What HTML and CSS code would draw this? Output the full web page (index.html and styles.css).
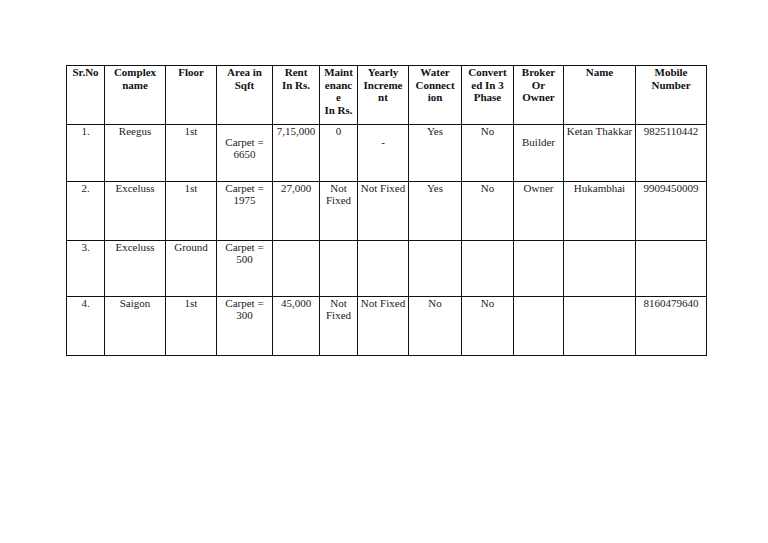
FILE: index.html
```html
<!DOCTYPE html>
<html>
<head>
<meta charset="utf-8">
<link rel="stylesheet" href="styles.css">
</head>
<body>
<div class="page">
<table class="sheet">
<colgroup>
<col class="c1"><col class="c2"><col class="c3"><col class="c4"><col class="c5"><col class="c6"><col class="c7"><col class="c8"><col class="c9"><col class="c10"><col class="c11"><col class="c12">
</colgroup>
<tr class="head">
<th>Sr.No</th>
<th>Complex<br>name</th>
<th>Floor</th>
<th>Area in<br>Sqft</th>
<th>Rent<br>In Rs.</th>
<th>Maint<br>enanc<br>e<br>In Rs.</th>
<th>Yearly<br>Increme<br>nt</th>
<th>Water<br>Connect<br>ion</th>
<th>Convert<br>ed In 3<br>Phase</th>
<th>Broker<br>Or<br>Owner</th>
<th>Name</th>
<th>Mobile<br>Number</th>
</tr>
<tr class="r1">
<td>1.</td>
<td>Reegus</td>
<td>1st</td>
<td class="low">Carpet =<br>6650</td>
<td>7,15,000</td>
<td>0</td>
<td class="low">-</td>
<td>Yes</td>
<td>No</td>
<td class="low">Builder</td>
<td>Ketan Thakkar</td>
<td>9825110442</td>
</tr>
<tr class="r2">
<td>2.</td>
<td>Exceluss</td>
<td>1st</td>
<td>Carpet =<br>1975</td>
<td>27,000</td>
<td>Not<br>Fixed</td>
<td>Not Fixed</td>
<td>Yes</td>
<td>No</td>
<td>Owner</td>
<td>Hukambhai</td>
<td>9909450009</td>
</tr>
<tr class="r3">
<td>3.</td>
<td>Exceluss</td>
<td>Ground</td>
<td>Carpet =<br>500</td>
<td></td>
<td></td>
<td></td>
<td></td>
<td></td>
<td></td>
<td></td>
<td></td>
</tr>
<tr class="r4">
<td>4.</td>
<td>Saigon</td>
<td>1st</td>
<td>Carpet =<br>300</td>
<td>45,000</td>
<td>Not<br>Fixed</td>
<td>Not Fixed</td>
<td>No</td>
<td>No</td>
<td></td>
<td></td>
<td>8160479640</td>
</tr>
</table>
</div>
</body>
</html>
```
FILE: styles.css
```css
html, body {
  margin: 0;
  padding: 0;
  background: #fff;
}
.page {
  padding: 65px 0 0 66px;
}
.sheet {
  border-collapse: collapse;
  table-layout: fixed;
  width: 641px;
  font-family: "Liberation Serif", "Times New Roman", serif;
  font-size: 11px;
  line-height: 12.2px;
  color: #222;
}
.sheet th, .sheet td {
  border: 1px solid #111;
  padding: 0;
  text-align: center;
  vertical-align: top;
  white-space: nowrap;
  overflow: hidden;
}
.sheet th {
  font-weight: bold;
  color: #111;
  line-height: 12.6px;
}
.sheet td.low {
  padding-top: 11px;
}
.c1 { width: 38px; }
.c2 { width: 61px; }
.c3 { width: 51px; }
.c4 { width: 56px; }
.c5 { width: 47px; }
.c6 { width: 38px; }
.c7 { width: 51px; }
.c8 { width: 53px; }
.c9 { width: 52px; }
.c10 { width: 50px; }
.c11 { width: 72px; }
.c12 { width: 71px; }
.head { height: 59px; }
.r1 { height: 57px; }
.r2 { height: 59px; }
.r3 { height: 56px; }
.r4 { height: 59px; }
```
